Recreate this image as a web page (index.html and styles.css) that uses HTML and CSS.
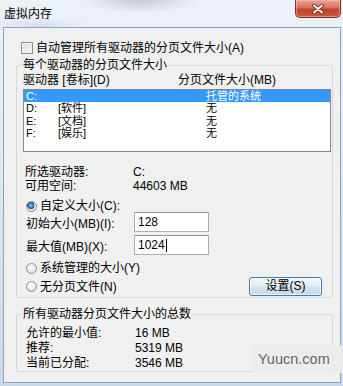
FILE: index.html
```html
<!DOCTYPE html>
<html lang="zh-CN">
<head>
<meta charset="utf-8">
<title>虚拟内存</title>
<link rel="stylesheet" href="styles.css">
</head>
<body>
<div class="window">
  <header class="titlebar">
    <span class="title">虚拟内存</span>
    <button class="close" aria-label="关闭">
      <svg width="12" height="10" viewBox="0 0 12 10">
        <path d="M2 1.5 L10 8.5 M10 1.5 L2 8.5" stroke="#5a2018" stroke-width="3.6" stroke-linecap="round"/>
        <path d="M2 1.5 L10 8.5 M10 1.5 L2 8.5" stroke="#ffffff" stroke-width="2" stroke-linecap="round"/>
      </svg>
    </button>
  </header>
  <main class="client">
    <label class="check-row"><span class="checkbox"></span>自动管理所有驱动器的分页文件大小(A)</label>

    <fieldset class="group group-drives">
      <legend>每个驱动器的分页文件大小</legend>
      <div class="list-header">
        <span class="hcol-drive">驱动器 [卷标](D)</span>
        <span>分页文件大小(MB)</span>
      </div>
      <ul class="drive-list">
        <li class="selected"><span class="c-drive">C:</span><span class="c-label"></span><span class="c-size">托管的系统</span></li>
        <li><span class="c-drive">D:</span><span class="c-label">[软件]</span><span class="c-size">无</span></li>
        <li><span class="c-drive">E:</span><span class="c-label">[文档]</span><span class="c-size">无</span></li>
        <li><span class="c-drive">F:</span><span class="c-label">[娱乐]</span><span class="c-size">无</span></li>
      </ul>
      <div class="info">
        <span>所选驱动器:</span><span>C:</span>
        <span>可用空间:</span><span>44603 MB</span>
      </div>
      <div class="radio-row radio-custom"><span class="radio checked"></span>自定义大小(C):</div>
      <div class="size-grid">
        <span>初始大小(MB)(I):</span><span class="textbox">128</span>
        <span>最大值(MB)(X):</span><span class="textbox">1024<span class="caret"></span></span>
      </div>
      <div class="radio-row radio-system"><span class="radio"></span>系统管理的大小(Y)</div>
      <div class="last-row">
        <div class="radio-row"><span class="radio"></span>无分页文件(N)</div>
        <button class="btn">设置(S)</button>
      </div>
    </fieldset>

    <fieldset class="group group-total">
      <legend>所有驱动器分页文件大小的总数</legend>
      <div class="totals">
        <span>允许的最小值:</span><span>16 MB</span>
        <span>推荐:</span><span>5319 MB</span>
        <span>当前已分配:</span><span>3546 MB</span>
      </div>
    </fieldset>
  </main>
  <div class="watermark">Yuucn.com</div>
</div>
</body>
</html>
```

FILE: styles.css
```css
* { box-sizing: border-box; }

html, body {
  margin: 0;
  padding: 0;
}

body {
  width: 343px;
  height: 386px;
  overflow: hidden;
  font-family: "Liberation Sans", "Noto Sans CJK SC", sans-serif;
  font-size: 12px;
  color: #000;
  background: #c9d9ec;
}

.window {
  position: relative;
  width: 343px;
  height: 386px;
  display: flex;
  flex-direction: column;
  background:
    radial-gradient(ellipse 60px 12px at 140px 1px, rgba(150,160,175,0.45), rgba(150,160,175,0) 100%),
    radial-gradient(ellipse 50px 10px at 40px 27px, rgba(160,175,195,0.3), rgba(160,175,195,0) 100%),
    linear-gradient(to bottom, #edf2f8 0%, #dfe8f3 40%, #c9d9ec 100%);
}

.titlebar {
  height: 27px;
  flex: none;
  display: flex;
  justify-content: space-between;
  align-items: flex-start;
  padding-left: 4px;
}

.title {
  margin-top: 7px;
  line-height: 14px;
  font-size: 12px;
}

.close {
  width: 46px;
  height: 18px;
  margin: 0 2px 0 0;
  padding: 0;
  border: 1px solid #7a3226;
  border-top: none;
  border-radius: 0 0 5px 5px;
  background: linear-gradient(to bottom, #e9a597 0%, #d8705c 45%, #c2412a 55%, #cc5a3e 100%);
  box-shadow: inset 0 0 0 1px rgba(255,210,200,0.45);
  display: flex;
  align-items: center;
  justify-content: center;
}

.client {
  flex: 1;
  margin: 0 2px 3px 3px;
  border: 1px solid #8fa3bd;
  background: #f0f0f0;
  display: flex;
  flex-direction: column;
}

.check-row {
  display: flex;
  align-items: center;
  gap: 3px;
  height: 12px;
  line-height: 12px;
  margin: 14px 0 0 17px;
}

.checkbox {
  width: 12px;
  height: 12px;
  border: 1px solid #8e8f8f;
  background: linear-gradient(135deg, #dcdcdc, #f6f6f6);
  box-shadow: inset 0 0 0 1px #f4f4f4;
}

.group {
  margin: 0 0 0 12px;
  width: 317px;
  min-width: 0;
  border: 1px solid #d3d8dc;
  border-radius: 2px;
  padding: 0 1px 1px 6px;
}

.group legend {
  padding: 0 1px;
  margin-left: -1px;
  line-height: 12px;
  height: 12px;
}

.group-drives { margin-top: 5px; }
.group-total { margin-top: 10px; padding-bottom: 0; }

.list-header {
  display: flex;
  margin-top: 3px;
  height: 12px;
  line-height: 12px;
}

.hcol-drive { width: 155px; }

.drive-list {
  list-style: none;
  margin: 3px 0 0 0;
  padding: 0;
  width: 308px;
  height: 63px;
  border: 1px solid #828790;
  background: #fff;
  font-size: 11px;
}

.drive-list li {
  display: flex;
  height: 12.3px;
  line-height: 12.3px;
  padding-left: 2px;
}

.drive-list li.selected {
  background: #3399ff;
  color: #fff;
}

.c-drive { width: 32px; }
.c-label { width: 148px; }

.info {
  display: grid;
  grid-template-columns: 108px auto;
  margin: 14px 0 0 2px;
  line-height: 13.5px;
}

.radio-row {
  display: flex;
  align-items: center;
  gap: 3px;
  height: 12px;
  line-height: 12px;
  margin-left: 3px;
}

.radio-custom { margin-top: 7px; }
.radio-system { margin-top: 7px; }

.radio {
  width: 11px;
  height: 11px;
  border-radius: 50%;
  border: 1px solid #8e8f8f;
  background: radial-gradient(circle at 40% 35%, #ffffff, #d6d6d6);
}

.radio.checked {
  background:
    radial-gradient(circle at 42% 38%, #9fd3f5 0, #3a7bb8 2.2px, #1c4f82 3.6px, transparent 3.8px),
    radial-gradient(circle at 40% 35%, #ffffff, #d6d6d6);
}

.size-grid {
  display: grid;
  grid-template-columns: 108px 75px;
  row-gap: 3px;
  align-items: center;
  margin-left: 3px;
}

.textbox {
  height: 20px;
  border: 1px solid #abadb3;
  border-top-color: #8e9297;
  background: #fff;
  padding-left: 3px;
  line-height: 18px;
  display: flex;
  align-items: center;
}

.caret {
  display: inline-block;
  width: 1px;
  height: 13px;
  background: #000;
  margin-left: 1px;
}

.last-row {
  display: flex;
  justify-content: space-between;
  align-items: center;
  margin: 3px 9px 0 0;
}

.btn {
  width: 73px;
  height: 19px;
  padding: 0;
  font: inherit;
  line-height: 17px;
  color: #000;
  border: 1px solid #3c7fb1;
  border-radius: 3px;
  background: linear-gradient(to bottom, #f2f7fb 0%, #e4edf4 48%, #d3e1ec 52%, #c9d9e6 100%);
  box-shadow: inset 0 0 0 1px rgba(255,255,255,0.7);
}

.totals {
  display: grid;
  grid-template-columns: 109px auto;
  margin: 6px 0 0 3px;
  line-height: 15px;
}

.watermark {
  position: absolute;
  left: 252px;
  top: 345px;
  width: 91px;
  height: 28px;
  background: rgba(236,236,236,0.92);
  font-family: "Liberation Sans", Arial, sans-serif;
  font-size: 14.5px;
  line-height: 28px;
  color: #666;
  padding-left: 6px;
}
```
